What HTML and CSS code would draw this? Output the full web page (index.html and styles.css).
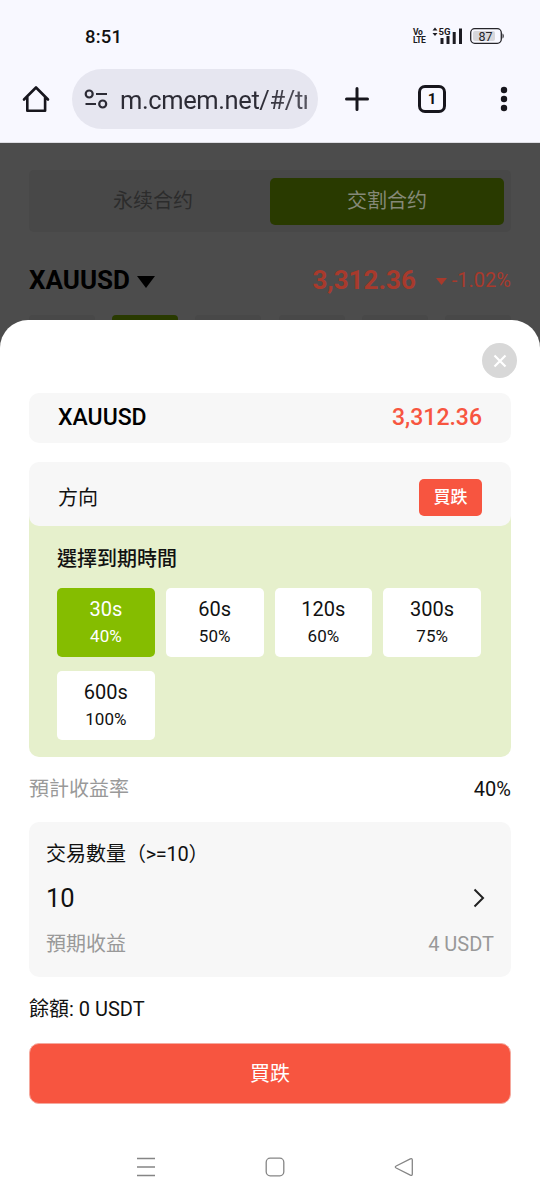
FILE: index.html
```html
<!DOCTYPE html>
<html lang="zh-Hant">
<head>
<meta charset="utf-8">
<meta name="viewport" content="width=device-width, initial-scale=1">
<title>XAUUSD</title>
<link rel="stylesheet" href="styles.css">
</head>
<body>
<header class="status">
  <span class="clock">8:51</span>
  <div class="signals">
    <div class="volte"><span>Vo</span><span>LTE</span></div>
    <svg width="74" height="20" viewBox="18 0 74 20">
      <path d="M19.500 4.500 22 1.500l2.500 3zM19.500 7 22 10l2.500-3z" fill="#1c1b22"/>
      <text class="fiveg" x="25.500" y="8.500" textLength="12" lengthAdjust="spacingAndGlyphs">5G</text>
      <path d="M27.500 12h3v6h-3zM33.500 10h3v8h-3zM39.700 6h3v12h-3zM46 2.500h3V18h-3z" fill="#1c1b22"/>
      <rect x="60" y="5" width="22" height="10" rx="2" fill="#d7d7dc"/>
      <rect x="57.700" y="2.700" width="30.600" height="14.600" rx="4" fill="none" stroke="#25242a" stroke-width="1.300"/>
      <path d="M89.500 7.500c1.700.5 1.700 4.500 0 5z" fill="#25242a"/>
      <text class="charge" x="65.500" y="14.500" textLength="14" lengthAdjust="spacingAndGlyphs">87</text>
    </svg>
  </div>
</header>

<nav class="browser">
  <svg class="home" width="30" height="30" viewBox="0 0 30 30" fill="none" stroke="#17161d" stroke-width="2.600" stroke-linecap="round" stroke-linejoin="round"><path d="M3 15.500 15 3.500l12 12M6.300 13v13.700h17.800V13"/></svg>
  <div class="address">
    <svg width="24" height="20" viewBox="0 0 24 20" fill="none" stroke="#2c2b35" stroke-width="2.200"><circle cx="5.200" cy="5" r="3.500"/><path d="M12 5h11M1.500 15H12"/><circle cx="18.700" cy="15" r="3.500"/></svg>
    <span class="url">m.cmem.net/#/tr</span>
  </div>
  <svg class="plus" width="26" height="26" viewBox="0 0 26 26" stroke="#17161d" stroke-width="3" stroke-linecap="round"><path d="M13 2.500v21M2.500 13h21"/></svg>
  <span class="tab-count">1</span>
  <svg class="more" width="10" height="28" viewBox="0 0 10 28" fill="#17161d"><circle cx="5" cy="5" r="3.200"/><circle cx="5" cy="14" r="3.200"/><circle cx="5" cy="23" r="3.200"/></svg>
</nav>

<main class="page">
  <section class="backdrop">
    <div class="tabs" lang="zh-Hans"><span class="tab">永续合约</span><span class="tab tab-active">交割合约</span></div>
    <div class="quote">
      <b class="pair">XAUUSD</b>
      <svg class="caret" width="18" height="12" viewBox="0 0 18 12"><path d="M0 0h18L9 12z"/></svg>
      <b class="last">3,312.36</b>
      <svg class="down" width="11" height="8" viewBox="0 0 11 8"><path d="M0 0h11L5.500 7z"/></svg>
      <span class="change">-1.02%</span>
    </div>
    <div class="periods"><i></i><i class="on"></i><i></i><i></i><i></i><i></i></div>
  </section>

  <section class="sheet">
    <div class="sheet-top">
      <button class="close" aria-label="關閉"><svg width="14" height="14" viewBox="0 0 14 14" stroke="#fff" stroke-width="2.200"><path d="m1.500 1.500 11 11m0-11-11 11"/></svg></button>
    </div>
    <div class="symbol"><span>XAUUSD</span><span class="red">3,312.36</span></div>
    <div class="direction"><span>方向</span><span class="badge">買跌</span></div>
    <div class="expiry">
      <h2>選擇到期時間</h2>
      <div class="options">
        <div class="option selected"><span>30s</span><small>40%</small></div>
        <div class="option"><span>60s</span><small>50%</small></div>
        <div class="option"><span>120s</span><small>60%</small></div>
        <div class="option"><span>300s</span><small>75%</small></div>
        <div class="option"><span>600s</span><small>100%</small></div>
      </div>
    </div>
    <div class="rate"><span class="muted">預計收益率</span><span>40%</span></div>
    <div class="amount">
      <div class="amount-title">交易數量<span class="limit" lang="zh-Hans">（&gt;=10）</span></div>
      <div class="amount-value"><span>10</span><svg width="14" height="20" viewBox="0 0 14 20" fill="none" stroke="#222" stroke-width="2"><path d="m2.500 1.500 8.500 8.500-8.500 8.500"/></svg></div>
      <div class="amount-profit"><span>預期收益</span><span>4 USDT</span></div>
    </div>
    <div class="balance">餘額: 0 USDT</div>
    <button class="submit">買跌</button>
    <div class="system">
      <svg width="20" height="20" viewBox="0 0 20 20"><path d="M1 1.500h18M1 10h18M1 18.500h18"/></svg>
      <svg width="20" height="20" viewBox="0 0 20 20"><rect x="1.200" y="1.200" width="17.600" height="17.600" rx="4"/></svg>
      <svg width="20" height="20" viewBox="0 0 20 20"><path d="M18.300 3v14q0 2-2 1.200L2.200 11q-1.800-1 0-2L16.300 1.800q2-.8 2 1.200z"/></svg>
    </div>
  </section>
</main>
</body>
</html>
```
FILE: styles.css
```css
* { box-sizing: border-box; }
body {
  margin: 0;
  width: 540px;
  height: 1200px;
  overflow: hidden;
  display: flex;
  flex-direction: column;
  background: #f8f8ff;
  font: 20px/24px Roboto, "Noto Sans CJK TC", sans-serif;
  color: #111;
}
svg { flex: none; display: block; }
button { border: 0; padding: 0; font: inherit; color: #fff; }

.status { height: 60px; padding: 26px 35px 0 85px; display: flex; justify-content: space-between; }
.clock { font: 500 18.5px/22px Roboto, sans-serif; letter-spacing: 0.2px; }
.signals { display: flex; gap: 6px; }
.volte { display: grid; grid-template-rows: 8px 8px; height: 16px; margin-top: 2px; font: 700 8.5px/8px Roboto, sans-serif; width: 12px; letter-spacing: -0.4px; color: #1c1b22; }
.fiveg { font: 700 9.5px Roboto, sans-serif; fill: #1c1b22; }
.charge { font: 400 12px Roboto, sans-serif; fill: #25242a; }

.browser { height: 83px; padding: 9px 31px 13px 21px; display: flex; align-items: center; border-bottom: 1px solid #dddde3; }
.address { width: 246px; height: 60px; margin-left: 21px; padding: 0 11px 0 12px; border-radius: 30px; background: #e6e6f0; display: flex; align-items: center; gap: 12px; }
.url {
  width: 187px;
  margin-top: 2px;
  overflow: hidden;
  white-space: nowrap;
  font-size: 25.5px;
  letter-spacing: -0.4px;
  line-height: 34px;
  color: transparent;
  background: linear-gradient(90deg, #2c2b35 75%, #55545f);
  background-clip: text;
}
.plus { margin-left: 26px; }
.tab-count { width: 28px; height: 28px; margin-left: 48px; border: 3px solid #17161d; border-radius: 7px; font: 700 15px/22px Roboto, sans-serif; text-align: center; }
.more { margin-left: auto; }

.page { position: relative; flex: 1; background: #4c4c4c; }
.backdrop { padding: 27px 29px 0; }
.tabs { height: 62px; padding: 8px 7px 7px; border-radius: 5px; background: #484848; display: grid; grid-template-columns: 1fr 1fr; font-family: Roboto, "Noto Sans CJK SC", sans-serif; }
.tab { border-radius: 5px; line-height: 46px; text-align: center; color: #2c2c2c; }
.tab-active { background: #293a00; color: #858978; }
.quote { height: 34px; margin-top: 31px; display: flex; align-items: center; }
.pair { font-size: 26px; color: #000; margin-right: 7px; }
.caret { margin-top: 4px; }
.last { margin-left: auto; font-size: 26px; color: #a83a2c; }
.down { margin: 3px 5px 0 20px; fill: #a83a2c; }
.change { color: #a83a2c; }
.periods { display: flex; justify-content: space-between; margin-top: 18px; }
.periods i { width: 66px; height: 28px; border-radius: 4px; background: #484848; }
.periods .on { background: #293a00; }

.sheet { position: absolute; left: 0; right: 0; top: 177px; bottom: 0; padding: 0 29px; border-radius: 28px 28px 0 0; background: #fff; }
.sheet-top { height: 73px; padding-top: 23px; margin-right: -6px; display: flex; justify-content: flex-end; }
.close { width: 35px; height: 35px; border-radius: 50%; background: #d8d8d8; display: grid; place-items: center; }
.symbol { height: 50px; padding: 0 29px; border-radius: 10px; background: #f7f7f7; display: flex; align-items: center; justify-content: space-between; font-size: 23px; font-weight: 500; color: #000; }
.symbol .red { color: #f75540; }
.direction { position: relative; height: 64px; margin-top: 19px; padding: 7px 29px 0; border-radius: 10px; background: #f7f7f7; display: flex; align-items: center; justify-content: space-between; }
.badge { width: 63px; height: 37px; border-radius: 5px; background: #f75540; color: #fff; font-size: 17px; font-weight: 500; line-height: 37px; text-align: center; }
.expiry { height: 241px; margin-top: -10px; padding: 31px 30px 0 28px; border-radius: 0 0 10px 10px; background: #e6f0cc; }
.expiry h2 { margin: 0 0 17px; font-size: 20px; line-height: 24px; font-weight: 500; }
.options { display: grid; grid-template-columns: repeat(4, 1fr); gap: 14px 11px; }
.option { height: 69px; padding-top: 9px; border-radius: 5px; background: #fff; display: flex; flex-direction: column; align-items: center; gap: 3px; }
.option small { font-size: 17px; }
.option.selected { background: #85bd00; color: #fff; }
.rate { height: 65px; padding-bottom: 2px; display: flex; align-items: center; justify-content: space-between; }
.muted { color: #999; }
.amount { height: 155px; padding: 20px 17px 0; border-radius: 10px; background: #f7f7f7; }
.limit { font-family: Roboto, "Noto Sans CJK SC", sans-serif; letter-spacing: -0.3px; }
.amount-value { height: 34px; margin: 15px 8px 17px 0; display: flex; align-items: center; justify-content: space-between; font-size: 25.5px; }
.amount-profit { display: flex; justify-content: space-between; color: #999; }
.balance { margin: 20px 0 22px; }
.submit { display: block; width: 100%; height: 61px; border: 1px solid #f5a99e; border-radius: 10px; background: #f75540; }
.system { padding: 53px 97px 0 107px; display: flex; justify-content: space-between; }
.system svg { fill: none; stroke: #858585; stroke-width: 1.3; }
```
